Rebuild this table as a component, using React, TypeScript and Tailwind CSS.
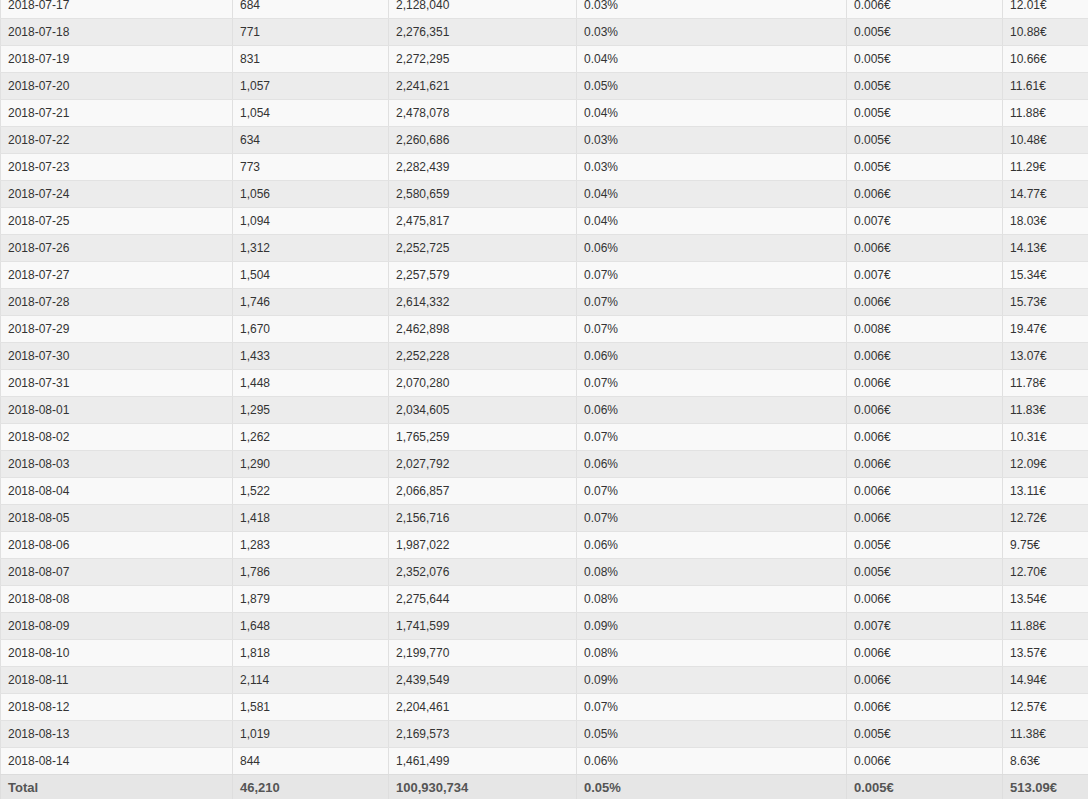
import React from "react";

const rows: [string, string, string, string, string, string][] = [
  ["2018-07-17", "684", "2,128,040", "0.03%", "0.006€", "12.01€"],
  ["2018-07-18", "771", "2,276,351", "0.03%", "0.005€", "10.88€"],
  ["2018-07-19", "831", "2,272,295", "0.04%", "0.005€", "10.66€"],
  ["2018-07-20", "1,057", "2,241,621", "0.05%", "0.005€", "11.61€"],
  ["2018-07-21", "1,054", "2,478,078", "0.04%", "0.005€", "11.88€"],
  ["2018-07-22", "634", "2,260,686", "0.03%", "0.005€", "10.48€"],
  ["2018-07-23", "773", "2,282,439", "0.03%", "0.005€", "11.29€"],
  ["2018-07-24", "1,056", "2,580,659", "0.04%", "0.006€", "14.77€"],
  ["2018-07-25", "1,094", "2,475,817", "0.04%", "0.007€", "18.03€"],
  ["2018-07-26", "1,312", "2,252,725", "0.06%", "0.006€", "14.13€"],
  ["2018-07-27", "1,504", "2,257,579", "0.07%", "0.007€", "15.34€"],
  ["2018-07-28", "1,746", "2,614,332", "0.07%", "0.006€", "15.73€"],
  ["2018-07-29", "1,670", "2,462,898", "0.07%", "0.008€", "19.47€"],
  ["2018-07-30", "1,433", "2,252,228", "0.06%", "0.006€", "13.07€"],
  ["2018-07-31", "1,448", "2,070,280", "0.07%", "0.006€", "11.78€"],
  ["2018-08-01", "1,295", "2,034,605", "0.06%", "0.006€", "11.83€"],
  ["2018-08-02", "1,262", "1,765,259", "0.07%", "0.006€", "10.31€"],
  ["2018-08-03", "1,290", "2,027,792", "0.06%", "0.006€", "12.09€"],
  ["2018-08-04", "1,522", "2,066,857", "0.07%", "0.006€", "13.11€"],
  ["2018-08-05", "1,418", "2,156,716", "0.07%", "0.006€", "12.72€"],
  ["2018-08-06", "1,283", "1,987,022", "0.06%", "0.005€", "9.75€"],
  ["2018-08-07", "1,786", "2,352,076", "0.08%", "0.005€", "12.70€"],
  ["2018-08-08", "1,879", "2,275,644", "0.08%", "0.006€", "13.54€"],
  ["2018-08-09", "1,648", "1,741,599", "0.09%", "0.007€", "11.88€"],
  ["2018-08-10", "1,818", "2,199,770", "0.08%", "0.006€", "13.57€"],
  ["2018-08-11", "2,114", "2,439,549", "0.09%", "0.006€", "14.94€"],
  ["2018-08-12", "1,581", "2,204,461", "0.07%", "0.006€", "12.57€"],
  ["2018-08-13", "1,019", "2,169,573", "0.05%", "0.005€", "11.38€"],
  ["2018-08-14", "844", "1,461,499", "0.06%", "0.006€", "8.63€"],
];

const total = ["Total", "46,210", "100,930,734", "0.05%", "0.005€", "513.09€"];

const widths = ["w-[232px]", "w-[156px]", "w-[188px]", "w-[270px]", "w-[156px]", "w-[86px]"];

export default function App() {
  return (
    <div className="w-[1088px] h-[799px] overflow-hidden bg-white font-['Liberation_Sans',Arial,sans-serif]">
      <div className="-mt-[9px] flex flex-col">
        {rows.map((r, i) => (
          <div
            key={r[0]}
            className={`flex h-[27px] border-t border-[#e2e2e2] ${i % 2 === 0 ? "bg-[#f9f9f9]" : "bg-[#ececec]"}`}
          >
            {r.map((c, j) => (
              <div
                key={j}
                className={`${widths[j]} shrink-0 flex items-center pl-[7px] text-[12px] text-[#333] border-l border-[#e0e0e0]`}
              >
                {c}
              </div>
            ))}
          </div>
        ))}
        <div className="flex h-[27px] border-t border-[#dcdcdc] bg-[#e6e6e6]">
          {total.map((c, j) => (
            <div
              key={j}
              className={`${widths[j]} shrink-0 flex items-center pl-[7px] text-[13px] font-bold text-[#555] border-l border-[#dedede]`}
            >
              {c}
            </div>
          ))}
        </div>
      </div>
    </div>
  );
}
